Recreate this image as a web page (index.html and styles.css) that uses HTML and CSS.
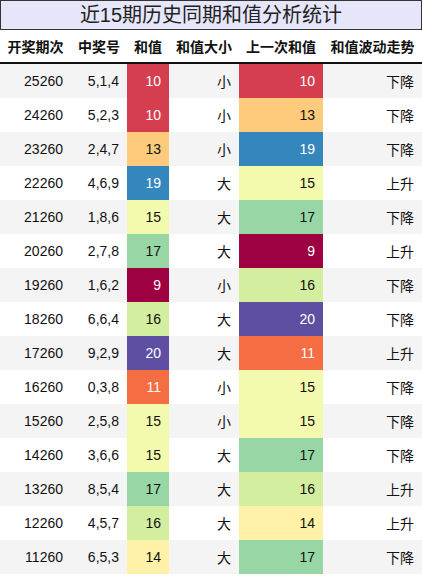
FILE: index.html
```html
<!DOCTYPE html>
<html>
<head>
  <link rel="stylesheet" href="styles.css">
</head>
<body>
  <div class="title">近15期历史同期和值分析统计</div>
  <table class="stats">
    <colgroup>
      <col class="w1"><col class="w2"><col class="w3"><col class="w4"><col class="w5"><col class="w6">
    </colgroup>
    <thead>
      <tr>
        <th>开奖期次</th><th>中奖号</th><th>和值</th><th>和值大小</th><th>上一次和值</th><th>和值波动走势</th>
      </tr>
    </thead>
    <tbody>
      <tr><td>25260</td><td>5,1,4</td><td class="c10">10</td><td>小</td><td class="c10">10</td><td>下降</td></tr>
      <tr><td>24260</td><td>5,2,3</td><td class="c10">10</td><td>小</td><td class="c13">13</td><td>下降</td></tr>
      <tr><td>23260</td><td>2,4,7</td><td class="c13">13</td><td>小</td><td class="c19">19</td><td>下降</td></tr>
      <tr><td>22260</td><td>4,6,9</td><td class="c19">19</td><td>大</td><td class="c15">15</td><td>上升</td></tr>
      <tr><td>21260</td><td>1,8,6</td><td class="c15">15</td><td>大</td><td class="c17">17</td><td>下降</td></tr>
      <tr><td>20260</td><td>2,7,8</td><td class="c17">17</td><td>大</td><td class="c9">9</td><td>上升</td></tr>
      <tr><td>19260</td><td>1,6,2</td><td class="c9">9</td><td>小</td><td class="c16">16</td><td>下降</td></tr>
      <tr><td>18260</td><td>6,6,4</td><td class="c16">16</td><td>大</td><td class="c20">20</td><td>下降</td></tr>
      <tr><td>17260</td><td>9,2,9</td><td class="c20">20</td><td>大</td><td class="c11">11</td><td>上升</td></tr>
      <tr><td>16260</td><td>0,3,8</td><td class="c11">11</td><td>小</td><td class="c15">15</td><td>下降</td></tr>
      <tr><td>15260</td><td>2,5,8</td><td class="c15">15</td><td>小</td><td class="c15">15</td><td>下降</td></tr>
      <tr><td>14260</td><td>3,6,6</td><td class="c15">15</td><td>大</td><td class="c17">17</td><td>下降</td></tr>
      <tr><td>13260</td><td>8,5,4</td><td class="c17">17</td><td>大</td><td class="c16">16</td><td>上升</td></tr>
      <tr><td>12260</td><td>4,5,7</td><td class="c16">16</td><td>大</td><td class="c14">14</td><td>上升</td></tr>
      <tr><td>11260</td><td>6,5,3</td><td class="c14">14</td><td>大</td><td class="c17">17</td><td>下降</td></tr>
    </tbody>
  </table>
</body>
</html>
```
FILE: styles.css
```css
body {
  margin: 0;
  background-color: white;
  font-family: "Liberation Sans", "Noto Sans CJK SC", sans-serif;
  color: #111;
}

.title {
  height: 28px;
  line-height: 28px;
  border: 1px solid #333;
  background-color: #e6e6fa;
  text-align: center;
  font-size: 20px;
  color: #222;
}

.stats {
  width: 422px;
  border-collapse: collapse;
  table-layout: fixed;
  font-size: 14px;
}

.stats .w1 { width: 71px; }
.stats .w2 { width: 56px; }
.stats .w3 { width: 42px; }
.stats .w4 { width: 70px; }
.stats .w5 { width: 84px; }
.stats .w6 { width: 99px; }

.stats th {
  height: 32px;
  padding: 0;
  font-weight: bold;
  text-align: center;
  white-space: nowrap;
  border-bottom: 2px solid #111;
}

.stats td {
  height: 34px;
  padding: 0 8px 0 0;
  text-align: right;
  white-space: nowrap;
}

.stats tbody tr:nth-child(odd) {
  background-color: #f4f4f4;
}

.c9 { background-color: #9e0142; color: white; }
.c10 { background-color: #d53e4f; color: white; }
.c11 { background-color: #f46d43; color: white; }
.c13 { background-color: #fecb7c; }
.c14 { background-color: #fff1a8; }
.c15 { background-color: #f3faad; }
.c16 { background-color: #d3ee9e; }
.c17 { background-color: #98d6a5; }
.c19 { background-color: #3487bc; color: white; }
.c20 { background-color: #5e4fa2; color: white; }
```
